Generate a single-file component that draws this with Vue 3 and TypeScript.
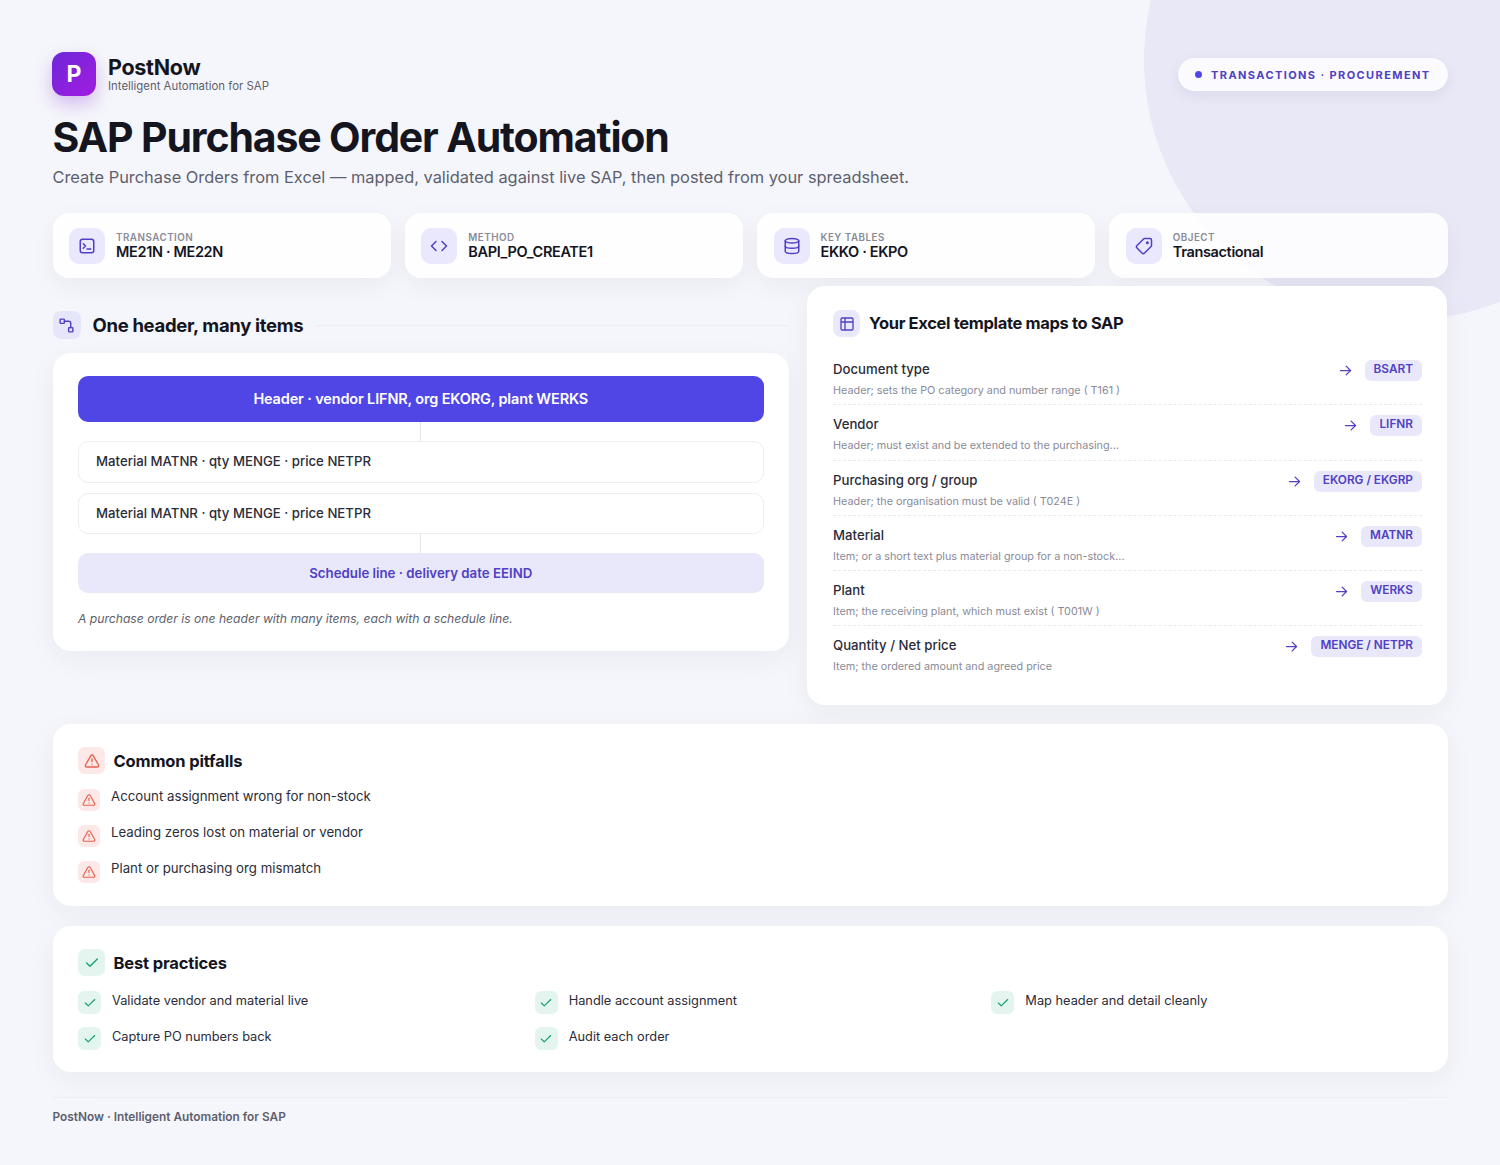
<template>
  <div class="page">
    <div class="blob"></div>

    <header class="top">
      <div class="top-left">
        <div class="brand">
          <div class="logo">P</div>
          <div>
            <div class="brand-name">PostNow</div>
            <div class="brand-sub">Intelligent Automation for SAP</div>
          </div>
        </div>
        <h1>SAP Purchase Order Automation</h1>
        <p class="lead">Create Purchase Orders from Excel — mapped, validated against live SAP, then posted from your spreadsheet.</p>
      </div>
      <div class="pill"><span class="dot"></span>TRANSACTIONS · PROCUREMENT</div>
    </header>

    <section class="stats">
      <div v-for="s in stats" :key="s.label" class="stat">
        <div class="stat-icon">
          <svg :class="{ flip: s.icon === 'tag' }" width="18" height="18" viewBox="0 0 24 24">
            <path v-for="d in icons[s.icon]" :key="d" :d="d" />
          </svg>
        </div>
        <div>
          <div class="stat-label">{{ s.label }}</div>
          <div class="stat-value">{{ s.value }}</div>
        </div>
      </div>
    </section>

    <section class="columns">
      <div class="left">
        <div class="section-head">
          <div class="section-icon">
            <svg width="17" height="17" viewBox="0 0 24 24">
              <path v-for="d in icons.flow" :key="d" :d="d" />
            </svg>
          </div>
          <h2>One header, many items</h2>
          <div class="rule"></div>
        </div>
        <div class="card diagram">
          <div class="d-header">Header · vendor LIFNR, org EKORG, plant WERKS</div>
          <div class="link"></div>
          <div class="d-items">
            <div v-for="n in 2" :key="n" class="d-item">Material MATNR · qty MENGE · price NETPR</div>
          </div>
          <div class="link"></div>
          <div class="d-schedule">Schedule line · delivery date EEIND</div>
          <p class="caption">A purchase order is one header with many items, each with a schedule line.</p>
        </div>
      </div>

      <div class="card mapping">
        <div class="map-head">
          <div class="map-icon">
            <svg width="16" height="16" viewBox="0 0 24 24">
              <path v-for="d in icons.table" :key="d" :d="d" />
            </svg>
          </div>
          <h3>Your Excel template maps to SAP</h3>
        </div>
        <div v-for="row in mapRows" :key="row.label" class="map-row">
          <div class="map-text">
            <div class="map-label">{{ row.label }}</div>
            <div class="map-desc">{{ row.desc }}</div>
          </div>
          <svg class="arrow" width="15" height="15" viewBox="0 0 24 24">
            <path v-for="d in icons.arrow" :key="d" :d="d" />
          </svg>
          <span class="chip">{{ row.field }}</span>
        </div>
      </div>
    </section>

    <section class="card notes pitfalls">
      <div class="notes-head">
        <div class="tile tile-red tile-big">
          <svg width="16" height="16" viewBox="0 0 24 24"><path v-for="d in icons.alert" :key="d" :d="d" /></svg>
        </div>
        <h3>Common pitfalls</h3>
      </div>
      <div v-for="p in pitfalls" :key="p" class="pitfall">
        <div class="tile tile-red">
          <svg width="14" height="14" viewBox="0 0 24 24"><path v-for="d in icons.alert" :key="d" :d="d" /></svg>
        </div>
        <span>{{ p }}</span>
      </div>
    </section>

    <section class="card notes best">
      <div class="notes-head">
        <div class="tile tile-green tile-big">
          <svg width="16" height="16" viewBox="0 0 24 24"><path v-for="d in icons.check" :key="d" :d="d" /></svg>
        </div>
        <h3>Best practices</h3>
      </div>
      <div class="best-grid">
        <div v-for="b in practices" :key="b" class="practice">
          <div class="tile tile-green">
            <svg width="14" height="14" viewBox="0 0 24 24"><path v-for="d in icons.check" :key="d" :d="d" /></svg>
          </div>
          <span>{{ b }}</span>
        </div>
      </div>
    </section>

    <footer class="foot">PostNow · Intelligent Automation for SAP</footer>
  </div>
</template>

<script setup lang="ts">
// Trazos de los iconos, todos en una caja de 24x24
const icons: Record<string, string[]> = {
  terminal: ['m7 9 3 3-3 3', 'M12 16h5', 'M6 3h12a3 3 0 0 1 3 3v12a3 3 0 0 1-3 3H6a3 3 0 0 1-3-3V6a3 3 0 0 1 3-3z'],
  code: ['m16 18 6-6-6-6', 'm8 6-6 6 6 6'],
  database: ['M3 5a9 3 0 1 0 18 0a9 3 0 1 0-18 0', 'M3 5V19A9 3 0 0 0 21 19V5', 'M3 12A9 3 0 0 0 21 12'],
  tag: [
    'M12.586 2.586A2 2 0 0 0 11.172 2H4a2 2 0 0 0-2 2v7.172a2 2 0 0 0 .586 1.414l8.704 8.704a2.426 2.426 0 0 0 3.42 0l6.58-6.58a2.426 2.426 0 0 0 0-3.42z',
    'M6.5 7.5a1 1 0 1 0 2 0a1 1 0 1 0-2 0',
  ],
  flow: [
    'M4 3h4a1 1 0 0 1 1 1v4a1 1 0 0 1-1 1H4a1 1 0 0 1-1-1V4a1 1 0 0 1 1-1z',
    'M16 15h4a1 1 0 0 1 1 1v4a1 1 0 0 1-1 1h-4a1 1 0 0 1-1-1v-4a1 1 0 0 1 1-1z',
    'M9 6h6a3 3 0 0 1 3 3v6',
  ],
  table: ['M9 3H5a2 2 0 0 0-2 2v4m6-6h10a2 2 0 0 1 2 2v4M9 3v18m0 0h10a2 2 0 0 0 2-2V9M9 21H5a2 2 0 0 1-2-2V9m0 0h18'],
  arrow: ['M4 12h16', 'm13 5 7 7-7 7'],
  alert: ['m21.73 18-8-14a2 2 0 0 0-3.48 0l-8 14A2 2 0 0 0 4 21h16a2 2 0 0 0 1.73-3', 'M12 9v4', 'M12 17h.01'],
  check: ['M20 6 9 17l-5-5'],
}

const stats = [
  { icon: 'terminal', label: 'TRANSACTION', value: 'ME21N · ME22N' },
  { icon: 'code', label: 'METHOD', value: 'BAPI_PO_CREATE1' },
  { icon: 'database', label: 'KEY TABLES', value: 'EKKO · EKPO' },
  { icon: 'tag', label: 'OBJECT', value: 'Transactional' },
]

const mapRows = [
  { label: 'Document type', desc: 'Header; sets the PO category and number range ( T161 )', field: 'BSART' },
  { label: 'Vendor', desc: 'Header; must exist and be extended to the purchasing...', field: 'LIFNR' },
  { label: 'Purchasing org / group', desc: 'Header; the organisation must be valid ( T024E )', field: 'EKORG / EKGRP' },
  { label: 'Material', desc: 'Item; or a short text plus material group for a non-stock...', field: 'MATNR' },
  { label: 'Plant', desc: 'Item; the receiving plant, which must exist ( T001W )', field: 'WERKS' },
  { label: 'Quantity / Net price', desc: 'Item; the ordered amount and agreed price', field: 'MENGE / NETPR' },
]

const pitfalls = [
  'Account assignment wrong for non-stock',
  'Leading zeros lost on material or vendor',
  'Plant or purchasing org mismatch',
]

const practices = [
  'Validate vendor and material live',
  'Handle account assignment',
  'Map header and detail cleanly',
  'Capture PO numbers back',
  'Audit each order',
]
</script>

<style>
html,
body {
  margin: 0;
  background: #f5f6fb;
}
</style>

<style scoped>
* {
  box-sizing: border-box;
}

.page {
  position: relative;
  width: 1500px;
  height: 1165px;
  padding: 52px 52.5px 0;
  overflow: hidden;
  background: #f5f6fb;
  color: #14151f;
  font-family: Inter, "Liberation Sans", sans-serif;
}

.blob {
  position: absolute;
  top: -200px;
  right: -164px;
  width: 520px;
  height: 520px;
  border-radius: 50%;
  background: #e8e8f6;
}

svg {
  fill: none;
  stroke: currentColor;
  stroke-width: 2;
  stroke-linecap: round;
  stroke-linejoin: round;
  flex: none;
}

.flip {
  transform: scaleX(-1);
}

/* Cabecera */
.top {
  position: relative;
  display: flex;
  justify-content: space-between;
  align-items: flex-start;
}

.brand {
  display: flex;
  align-items: center;
  gap: 12px;
  margin-left: -0.5px;
}

.logo {
  width: 44px;
  height: 44px;
  border-radius: 12px;
  background: linear-gradient(135deg, #6d28d9, #a21ce0);
  box-shadow: 0 8px 18px rgba(126, 34, 206, 0.28);
  color: #fff;
  font-size: 23px;
  font-weight: 700;
  line-height: 44px;
  text-align: center;
}

.brand-name {
  margin-top: 1px;
  font-size: 21.5px;
  font-weight: 700;
  line-height: 26px;
  letter-spacing: -0.3px;
}

.brand-sub {
  margin: -1px 0 2px;
  font-size: 11.4px;
  line-height: 15px;
  color: #5d5f6e;
}

h1 {
  margin: 16px 0 0;
  font-size: 41px;
  font-weight: 700;
  line-height: 50px;
  letter-spacing: -1.14px;
}

.lead {
  margin: 2px 0 0;
  font-size: 16.4px;
  line-height: 26px;
  color: #5d5f6e;
}

.pill {
  display: flex;
  align-items: center;
  gap: 9px;
  height: 33px;
  margin-top: 6px;
  padding: 0 17px;
  border-radius: 17px;
  background: #fafaff;
  box-shadow: 0 4px 14px rgba(30, 30, 80, 0.07);
  color: #4f40c4;
  font-size: 11px;
  font-weight: 700;
  letter-spacing: 1.4px;
}

.dot {
  width: 7px;
  height: 7px;
  border-radius: 50%;
  background: #4f46e5;
}

/* Tarjetas de datos */
.stats {
  position: relative;
  display: grid;
  grid-template-columns: repeat(4, 1fr);
  gap: 14px;
  margin-top: 23px;
}

.stat {
  display: flex;
  align-items: center;
  gap: 11px;
  height: 65px;
  padding: 0 16.5px;
  border-radius: 16px;
  background: rgba(255, 255, 255, 0.85);
  box-shadow: 0 8px 24px rgba(30, 30, 80, 0.05);
}

.stat-icon {
  display: flex;
  align-items: center;
  justify-content: center;
  width: 36px;
  height: 36px;
  border-radius: 10px;
  background: #e9e8fc;
  color: #4f40c4;
}

.stat-label {
  font-size: 9.8px;
  font-weight: 600;
  line-height: 13px;
  letter-spacing: 0.5px;
  color: #8a8b98;
}

.stat-value {
  font-size: 14.5px;
  font-weight: 600;
  line-height: 16px;
  letter-spacing: -0.35px;
}

/* Columnas */
.columns {
  position: relative;
  display: grid;
  grid-template-columns: 1.15fr 1fr;
  gap: 18px;
  align-items: start;
  margin-top: 8px;
}

.left {
  padding-top: 25px;
}

.section-head {
  display: flex;
  align-items: center;
  height: 28px;
}

.section-icon {
  display: flex;
  align-items: center;
  justify-content: center;
  width: 28px;
  height: 28px;
  border-radius: 8px;
  background: #e6e6fa;
  color: #4f40c4;
}

h2 {
  margin: 0 12px;
  font-size: 18.5px;
  font-weight: 700;
  letter-spacing: -0.32px;
  white-space: nowrap;
}

.rule {
  flex: 1;
  height: 1px;
  background: #ecedf4;
}

.card {
  border-radius: 18px;
  background: #fff;
  box-shadow: 0 8px 28px rgba(30, 30, 80, 0.05);
}

.diagram {
  margin-top: 14px;
  padding: 23px 25.5px 0;
  height: 298px;
}

.d-header {
  height: 46px;
  border-radius: 10px;
  background: #4f46e5;
  color: #fff;
  font-size: 14.5px;
  font-weight: 600;
  line-height: 46px;
  letter-spacing: -0.15px;
  text-align: center;
}

.link {
  width: 1px;
  height: 19px;
  margin: 0 auto;
  background: #e3e4ec;
}

.d-items {
  display: flex;
  flex-direction: column;
  gap: 10px;
}

.d-item {
  height: 41.5px;
  padding: 0 17px;
  border: 1px solid #eceef4;
  border-radius: 10px;
  font-size: 13.2px;
  font-weight: 500;
  line-height: 39px;
  color: #2b2c38;
}

.d-schedule {
  height: 40px;
  border-radius: 10px;
  background: #e9e8fb;
  color: #4f40c4;
  font-size: 13.25px;
  font-weight: 600;
  line-height: 40px;
  text-align: center;
}

.caption {
  margin: 18px 0 0;
  font-size: 12.15px;
  font-style: italic;
  line-height: 16px;
  color: #5d5f6e;
}

.mapping {
  height: 419px;
  padding: 24px 25.5px 0 26px;
}

.map-head {
  display: flex;
  align-items: center;
  gap: 9px;
  height: 27px;
  margin-bottom: 13px;
}

.map-head h3 {
  margin-bottom: 2px;
  letter-spacing: -0.34px;
}

.map-icon {
  display: flex;
  align-items: center;
  justify-content: center;
  width: 27px;
  height: 27px;
  border-radius: 8px;
  background: #e9e8fc;
  color: #4f40c4;
}

h3 {
  margin: 0;
  font-size: 16.5px;
  font-weight: 700;
  letter-spacing: -0.15px;
}

.map-row {
  display: flex;
  align-items: flex-start;
  height: 55.3px;
  padding-top: 10px;
  border-bottom: 1px dashed #e9eaf1;
}

.map-row:last-child {
  border-bottom: none;
}

.map-text {
  flex: 1;
  min-width: 0;
}

.map-label {
  font-size: 13.2px;
  font-weight: 500;
  line-height: 19px;
  color: #2b2c38;
}

.map-desc {
  margin-top: 5px;
  font-size: 10.8px;
  line-height: 14px;
  color: #8a8b98;
}

.arrow {
  margin: 3px 12px 0 0;
  color: #4f40c4;
}

.chip {
  padding: 0 9px;
  height: 21px;
  border-radius: 6px;
  background: #e9e8fb;
  color: #4f40c4;
  font-size: 11.8px;
  font-weight: 600;
  line-height: 19px;
}

/* Avisos y buenas prácticas */
.notes {
  position: relative;
  padding: 23px 25.5px 0;
}

.pitfalls {
  height: 182px;
  margin-top: 19px;
}

.best {
  height: 146px;
  margin-top: 20px;
}

.notes-head {
  display: flex;
  align-items: center;
  gap: 8.5px;
  height: 27px;
}

.tile {
  display: flex;
  align-items: center;
  justify-content: center;
  flex: none;
  width: 22px;
  height: 22px;
  border-radius: 6px;
}

.tile-big {
  width: 27px;
  height: 27px;
  border-radius: 7px;
}

.tile-red {
  background: #fde8e8;
  color: #e5604e;
}

.tile-green {
  background: #e3f5ee;
  color: #14a070;
}

.pitfall {
  display: flex;
  gap: 11px;
  height: 36px;
  font-size: 13.25px;
  line-height: 16px;
  color: #2b2c38;
}

.notes-head + .pitfall {
  margin-top: 15px;
}

.pitfall span {
  margin-top: -1px;
}

.best-grid {
  display: grid;
  grid-template-columns: repeat(3, 1fr);
  gap: 13px 26px;
  margin-top: 15px;
}

.practice {
  display: flex;
  align-items: flex-start;
  gap: 11px;
  height: 23px;
  font-size: 12.8px;
  line-height: 20px;
  color: #2b2c38;
}

.practice .tile {
  width: 23px;
  height: 23px;
}

.foot {
  position: relative;
  margin-top: 25px;
  padding-top: 11px;
  border-top: 1px solid #eeeff5;
  font-size: 11.85px;
  font-weight: 600;
  line-height: 16px;
  color: #5d5f6e;
}
</style>
